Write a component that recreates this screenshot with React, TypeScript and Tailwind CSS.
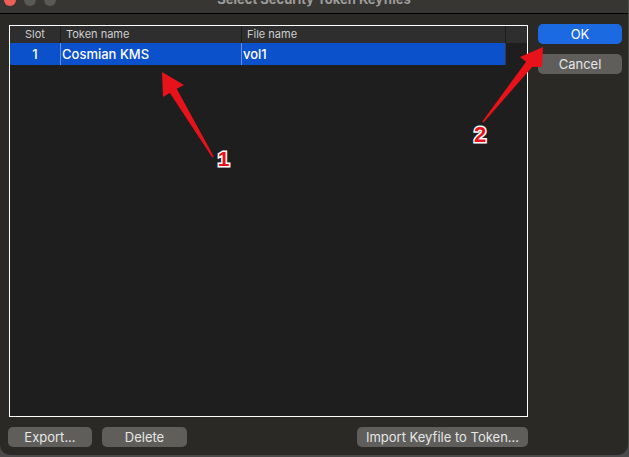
import React from "react";

export default function App() {
  const font = { fontFamily: "Inter, 'Liberation Sans', sans-serif" };
  return (
    <div className="w-[629px] h-[457px] bg-[#4b4b4b] relative overflow-hidden" style={font}>
      <div className="w-[628px] h-[455px] bg-[#2a2926] rounded-b-[10px] flex flex-col">
        {/* title bar */}
        <div className="h-[14px] bg-[#383633] border-b border-black relative overflow-hidden flex justify-center shrink-0">
          <div className="absolute left-[4px] top-[-6px] flex gap-[8px]">
            <div className="w-[12px] h-[12px] rounded-full bg-[#ec5f57]" />
            <div className="w-[12px] h-[12px] rounded-full bg-[#5a5957]" />
            <div className="w-[12px] h-[12px] rounded-full bg-[#5a5957]" />
          </div>
          <div className="mt-[-9px] text-[13px] leading-[16px] font-bold text-[#9d9c9a]">
            Select Security Token Keyfiles
          </div>
        </div>
        {/* body */}
        <div className="flex mt-[11px]">
          <div className="ml-[9px] w-[519px] h-[392px] border border-white bg-[#1e1e1e] flex flex-col">
            <div className="h-[17px] bg-[#2e2e2e] flex text-[11px] leading-[17px] text-[#cfcfcf]">
              <div className="w-[50px] text-center">Slot</div>
              <div className="w-px bg-[#1c1c1c]" />
              <div className="w-[180px] pl-[5px]">Token name</div>
              <div className="w-px bg-[#1c1c1c]" />
              <div className="w-[263px] pl-[5px]">File name</div>
              <div className="w-px bg-[#1c1c1c]" />
              <div className="flex-1" />
            </div>
            <div className="h-[22px] flex text-[13px] leading-[22px] font-medium text-white">
              <div className="w-[50px] text-center bg-[#0b51cc]">1</div>
              <div className="w-px bg-[#6d8fd6]" />
              <div className="w-[180px] pl-[1px] bg-[#0b51cc]">Cosmian KMS</div>
              <div className="w-px bg-[#6d8fd6]" />
              <div className="w-[263px] pl-[1px] bg-[#0b51cc]">vol1</div>
              <div className="w-px bg-[#3a3a3a]" />
              <div className="flex-1" />
            </div>
          </div>
          <div className="ml-[10px] w-[84px] flex flex-col gap-[10px] -mt-[1px]">
            <div className="h-[20px] rounded-[5px] bg-[#1c6ae2] text-white text-[13px] leading-[20px] text-center">OK</div>
            <div className="h-[20px] rounded-[5px] bg-[#5f5e5b] text-[#e6e6e6] text-[13px] leading-[20px] text-center">Cancel</div>
          </div>
        </div>
        <div className="flex mt-[10px] ml-[8px] text-[13px] leading-[20px] text-[#e6e6e6]">
          <div className="w-[84px] h-[20px] rounded-[5px] bg-[#5f5e5b] text-center">Export...</div>
          <div className="ml-[10px] w-[85px] h-[20px] rounded-[5px] bg-[#5f5e5b] text-center">Delete</div>
          <div className="ml-[170px] w-[171px] h-[20px] rounded-[5px] bg-[#5f5e5b] text-center">Import Keyfile to Token...</div>
        </div>
      </div>
      {/* annotations */}
      <svg className="absolute inset-0" width="629" height="457" viewBox="0 0 629 457">
        <polygon
          points="162,72 184,85 176.7,88.8 213.7,156.6 212.3,157.4 169.9,93 163,97"
          fill="#e8121a"
        />
        <polygon
          points="543,47 542,67 532.4,66.7 483.6,122.4 482.4,121.6 526.1,61.7 520,57"
          fill="#e8121a"
        />
        <text
          x="223.5"
          y="166"
          textAnchor="middle"
          fontSize="21"
          fontWeight="bold"
          fill="#e8121a"
          stroke="white"
          strokeWidth="3"
          paintOrder="stroke"
          style={{ fontFamily: "'Liberation Sans', Arial, sans-serif" }}
        >
          1
        </text>
        <text
          x="480"
          y="142"
          textAnchor="middle"
          fontSize="22"
          fontWeight="bold"
          fill="#e8121a"
          stroke="white"
          strokeWidth="3"
          paintOrder="stroke"
          style={{ fontFamily: "'Liberation Sans', Arial, sans-serif" }}
        >
          2
        </text>
      </svg>
    </div>
  );
}
